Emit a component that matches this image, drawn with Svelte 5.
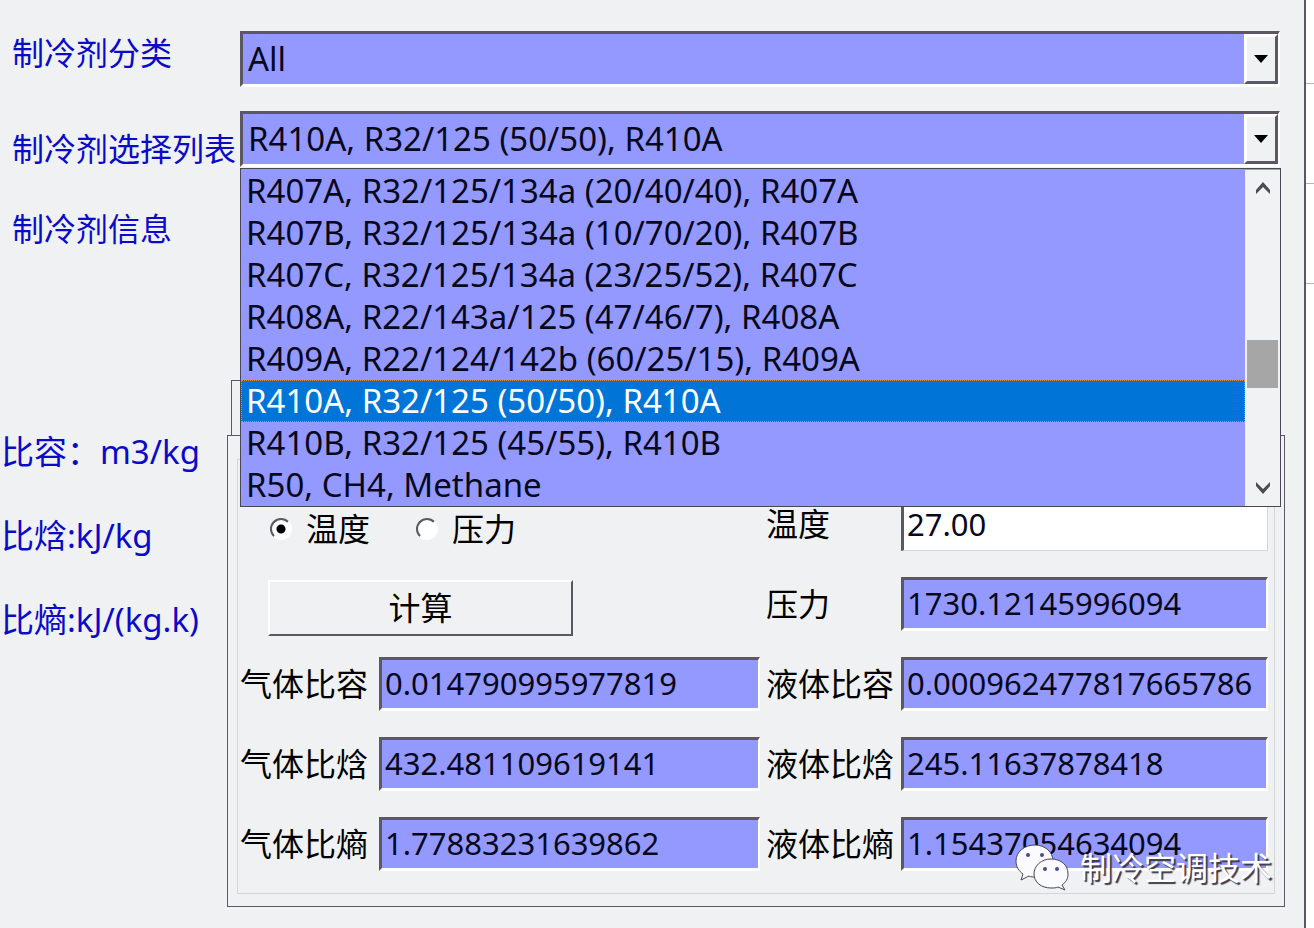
<script>
  const categories = ["All"];
  const refrigerants = [
    "R407A, R32/125/134a (20/40/40), R407A",
    "R407B, R32/125/134a (10/70/20), R407B",
    "R407C, R32/125/134a (23/25/52), R407C",
    "R408A, R22/143a/125 (47/46/7), R408A",
    "R409A, R22/124/142b (60/25/15), R409A",
    "R410A, R32/125 (50/50), R410A",
    "R410B, R32/125 (45/55), R410B",
    "R50, CH4, Methane",
  ];
  const units = ["比容：m3/kg", "比焓:kJ/kg", "比熵:kJ/(kg.k)"];
  const results = [
    { id: "gas-volume", label: "气体比容", value: "0.014790995977819" },
    { id: "liquid-volume", label: "液体比容", value: "0.000962477817665786" },
    { id: "gas-enthalpy", label: "气体比焓", value: "432.481109619141" },
    { id: "liquid-enthalpy", label: "液体比焓", value: "245.11637878418" },
    { id: "gas-entropy", label: "气体比熵", value: "1.77883231639862" },
    { id: "liquid-entropy", label: "液体比熵", value: "1.15437054634094" },
  ];

  let category = "All";
  let selected = refrigerants[5];
  let mode = "temperature";
  let temperature = "27.00";
  let pressure = "1730.12145996094";
</script>

<div class="window">
  <main class="form">
    <section class="top">
      <div class="captions">
        <label for="category">制冷剂分类</label>
        <label class="list-caption" for="refrigerant">制冷剂选择列表</label>
        <span class="info-caption">制冷剂信息</span>
      </div>
      <div class="combos">
        <div class="combo sunken">
          <select id="category" bind:value={category}>
            {#each categories as item (item)}
              <option value={item}>{item}</option>
            {/each}
          </select>
          <span class="arrow" aria-hidden="true">
            <svg width="14" height="8" viewBox="0 0 14 8"><path d="M0 0h14L7 8z" /></svg>
          </span>
        </div>
        <div class="combo sunken">
          <select id="refrigerant" bind:value={selected}>
            {#each refrigerants as item (item)}
              <option value={item}>{item}</option>
            {/each}
          </select>
          <span class="arrow" aria-hidden="true">
            <svg width="14" height="8" viewBox="0 0 14 8"><path d="M0 0h14L7 8z" /></svg>
          </span>
          <div class="dropdown">
            <ul role="listbox" aria-label="制冷剂选择列表">
              {#each refrigerants as item (item)}
                <li role="option" aria-selected={selected === item}>
                  <button
                    class="item"
                    class:active={selected === item}
                    on:click={() => (selected = item)}>{item}</button
                  >
                </li>
              {/each}
            </ul>
            <div class="scrollbar">
              <button aria-label="Up">
                <svg width="16" height="14" viewBox="0 0 16 14">
                  <path d="M8 1l7 8v4L8 6l-7 7V9z" />
                </svg>
              </button>
              <div class="track"><div class="thumb"></div></div>
              <button aria-label="Down">
                <svg width="16" height="14" viewBox="0 0 16 14">
                  <path d="M8 13l7-8V1L8 8 1 1v4z" />
                </svg>
              </button>
            </div>
          </div>
        </div>
      </div>
    </section>

    <section class="bottom">
      <ul class="units">
        {#each units as unit (unit)}
          <li>{unit}</li>
        {/each}
      </ul>
      <div class="tabs">
        <div class="tab"></div>
        <div class="page">
          <div class="group">
            <div class="modes wide">
              <label>
                <input type="radio" name="mode" value="temperature" bind:group={mode} />温度
              </label>
              <label>
                <input type="radio" name="mode" value="pressure" bind:group={mode} />压力
              </label>
            </div>
            <label class="name right" for="temperature">温度</label>
            <input class="field sunken editable" id="temperature" bind:value={temperature} />
            <div class="action wide">
              <button class="calc">计算</button>
            </div>
            <label class="name right" for="pressure">压力</label>
            <input class="field sunken" id="pressure" readonly value={pressure} />
            {#each results as result, i (result.id)}
              <label class="name" class:right={i % 2 === 1} for={result.id}>{result.label}</label>
              <input class="field sunken" id={result.id} readonly value={result.value} />
            {/each}
          </div>
        </div>
      </div>
    </section>
  </main>
  <div class="grid-edge"></div>

  <div class="watermark">
    <svg width="56" height="48" viewBox="0 0 56 48">
      <path
        class="bubble"
        d="M20 1C9 1 1 8 1 17c0 6 3 10 7 13l-2 6 8-4c2 1 4 1 7 1 10 0 17-7 17-16S30 1 20 1z"
      />
      <path
        class="bubble"
        d="M36 15c10 0 17 6 17 15 0 5-2 8-6 11l3 5-7-3c-2 1-4 1-7 1-10 0-17-6-17-14s7-15 17-15z"
      />
      <circle cx="13" cy="11" r="2" />
      <circle cx="27" cy="11" r="2" />
      <circle cx="30" cy="25" r="2" />
      <circle cx="42" cy="25" r="2" />
    </svg>
    <span>制冷空调技术</span>
  </div>
</div>

<style>
  :global(body) {
    margin: 0;
    background: #eff1f2;
  }
  .window {
    position: relative;
    display: flex;
    min-height: 100vh;
    color: #08081c;
    font-family: "Noto Sans", "Noto Sans CJK SC", sans-serif;
    font-size: 32px;
    line-height: 44px;
  }
  .window,
  .window * {
    box-sizing: border-box;
  }
  ul {
    margin: 0;
    padding: 0;
    list-style: none;
  }
  button,
  input,
  select {
    margin: 0;
    color: inherit;
    font: inherit;
  }
  .form {
    flex: 1;
    min-width: 0;
    border-right: 2px solid #5b5763;
  }
  .grid-edge {
    width: 8px;
    background: #fff linear-gradient(#b4b4bc 0 1px, #fff 1px 100px, #b4b4bc 100px 101px, #fff 101px 200px, #b4b4bc 200px 201px, #fff 201px)
      0 83px no-repeat;
  }
  .sunken {
    border: solid #fff;
    border-width: 3px 2px 3px 3px;
    border-top-color: #5b5763;
    border-left-color: #5b5763;
  }

  /* Combo boxes */
  .top {
    display: flex;
    min-height: 380px;
    padding: 31px 24px 0 0;
  }
  .captions {
    display: flex;
    flex-direction: column;
    flex: 0 0 240px;
    padding-left: 12px;
    color: #0a0ac8;
    white-space: nowrap;
  }
  .list-caption {
    margin-top: 52px;
  }
  .info-caption {
    margin-top: 36px;
  }
  .combos {
    display: flex;
    flex: 1;
    flex-direction: column;
    gap: 24px;
    min-width: 0;
  }
  .combo {
    position: relative;
    display: flex;
    height: 56px;
    background: #9499ff;
  }
  .combo select {
    flex: 1;
    min-width: 0;
    padding: 0 5px;
    border: 0;
    background: none;
    appearance: none;
    font-size: 33px;
  }
  .arrow {
    display: flex;
    align-items: center;
    justify-content: center;
    width: 34px;
    border: 3px solid #fff;
    border-right-color: #5b5763;
    border-bottom-color: #5b5763;
    background: #eff1f2;
    pointer-events: none;
  }
  .arrow svg {
    fill: #000;
  }
  .dropdown {
    position: absolute;
    top: 54px;
    right: -3px;
    left: -3px;
    z-index: 2;
    display: flex;
    padding-top: 1px;
    border: 1px solid #4a4656;
    background: #9499ff;
  }
  .dropdown ul {
    flex: 1;
    min-width: 0;
  }
  .item {
    display: block;
    width: 100%;
    height: 42px;
    padding: 0 4px;
    border: 1px solid transparent;
    background: none;
    font-size: 33px;
    line-height: 40px;
    text-align: left;
    white-space: nowrap;
  }
  .item.active {
    border: 1px dotted #d98a3a;
    background: #0075d7;
    color: #fff;
  }
  .scrollbar {
    display: flex;
    flex: 0 0 35px;
    flex-direction: column;
    padding: 0 2px;
    background: #f1f2f3;
  }
  .scrollbar button {
    display: flex;
    align-items: center;
    justify-content: center;
    height: 36px;
    padding: 0;
    border: 0;
    background: none;
  }
  .scrollbar path {
    fill: #4c4c50;
  }
  .track {
    flex: 1;
    padding-top: 134px;
  }
  .thumb {
    height: 48px;
    background: #a6a6a6;
  }

  /* Units and results */
  .bottom {
    display: flex;
    padding: 0 19px 20px 0;
  }
  .units {
    display: flex;
    flex: 0 0 227px;
    flex-direction: column;
    gap: 40px;
    padding: 50px 0 0 1px;
    color: #0a0ac8;
    font-size: 33px;
    white-space: nowrap;
  }
  .tabs {
    flex: 1;
    min-width: 0;
  }
  .tab {
    width: 300px;
    height: 55px;
    margin-left: 4px;
    border: solid #5b5763;
    border-width: 1px 1px 0;
  }
  .page {
    padding: 23px 9px 12px;
    border: 1px solid #5b5763;
  }
  .group {
    display: grid;
    grid-template-columns: 139px minmax(0, 381fr) 141px minmax(0, 367fr);
    grid-auto-rows: 54px;
    row-gap: 26px;
    align-items: center;
    padding: 37px 6px 22px 2px;
    border: 1px solid #d3d5d6;
    color: #000;
  }
  .wide {
    grid-column: span 2;
    align-self: start;
  }
  .name {
    white-space: nowrap;
  }
  .right {
    padding-left: 6px;
  }
  .field {
    width: 100%;
    height: 54px;
    padding: 0 3px 2px;
    border-radius: 0;
    background: #9499ff;
    color: #08081c;
    font-size: 31px;
  }
  .editable {
    border-right: 1px solid #d3d5d6;
    border-bottom: 1px solid #d3d5d6;
    background: #fff;
  }
  .modes {
    display: flex;
    gap: 46px;
    padding: 10px 0 0 30px;
  }
  .modes label {
    display: flex;
    align-items: center;
    gap: 14px;
  }
  .modes input {
    width: 22px;
    height: 22px;
    border: 2px solid #fff;
    border-top-color: #5b5763;
    border-left-color: #5b5763;
    border-radius: 50%;
    background: #fff;
    appearance: none;
  }
  .modes input:checked {
    background: radial-gradient(#000 0 4px, #fff 5px);
  }
  .action {
    padding: 3px 0 0 28px;
  }
  .calc {
    display: block;
    width: 62%;
    height: 56px;
    padding: 0;
    border: 2px solid #fff;
    border-right-color: #5b5763;
    border-bottom-color: #5b5763;
    background: #eff1f2;
  }

  .watermark {
    position: absolute;
    right: 42px;
    bottom: 36px;
    z-index: 3;
    display: flex;
    align-items: center;
    gap: 9px;
    color: #fff;
    text-shadow: 2px 2px 1px #3c3848;
    pointer-events: none;
  }
  .bubble {
    fill: #fafaff;
    stroke: #4a4656;
    stroke-width: 1;
  }
  .watermark circle {
    fill: #4a4a8c;
  }
</style>
